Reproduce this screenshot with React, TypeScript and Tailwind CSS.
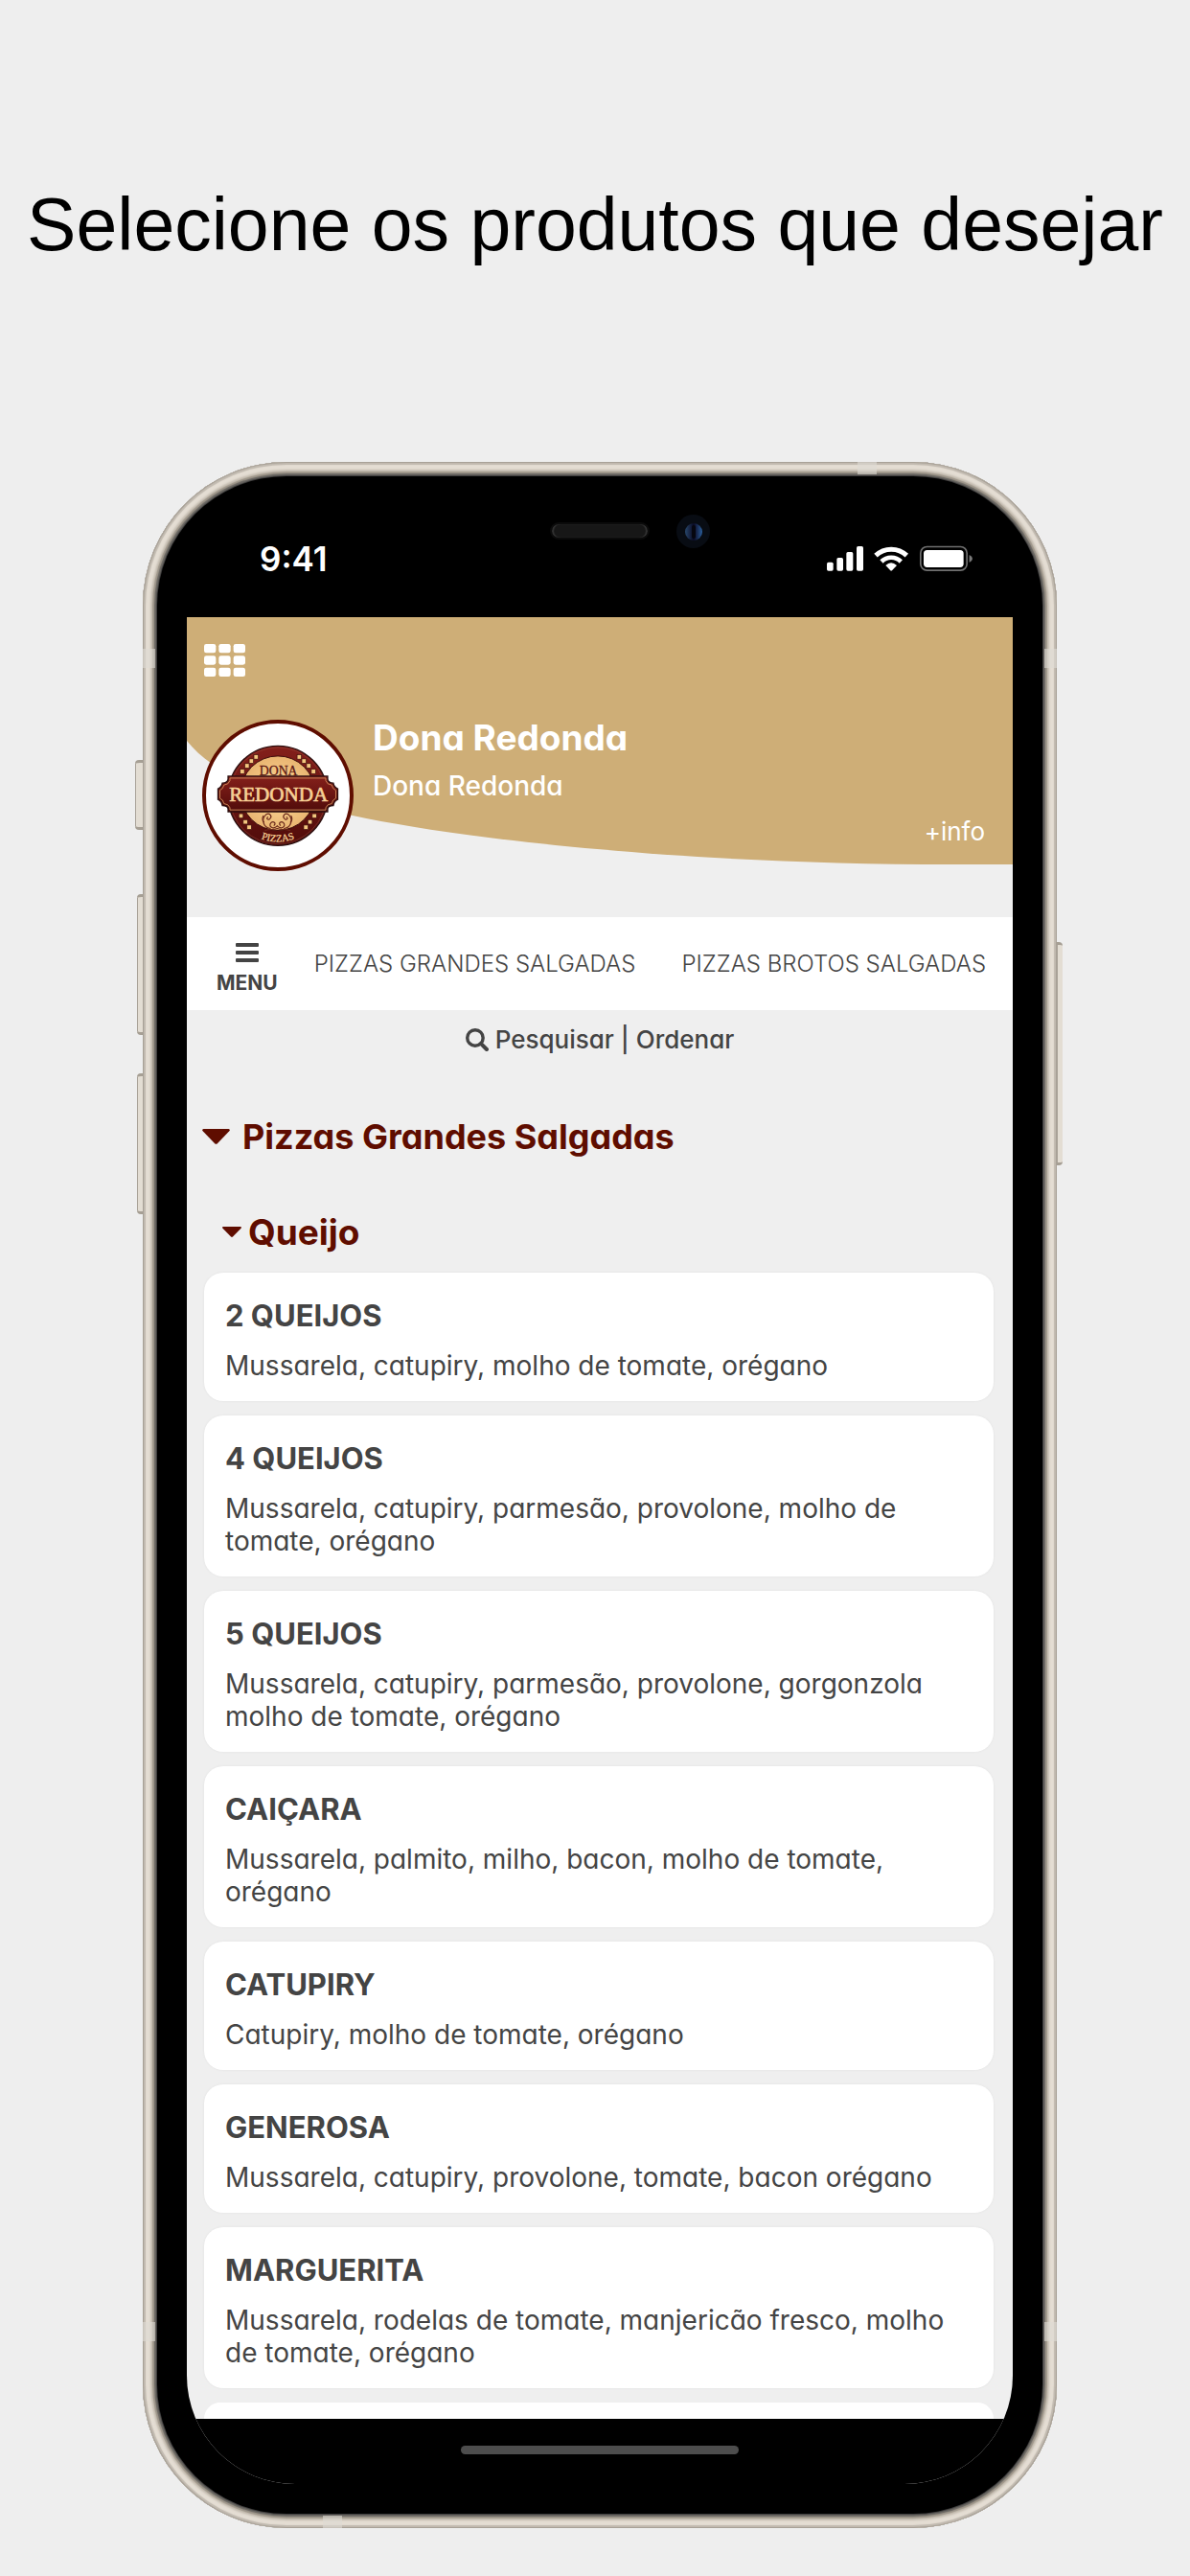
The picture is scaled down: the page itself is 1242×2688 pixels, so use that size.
import React from "react";

type Product = { name: string; description: string };

const products: Product[] = [
  { name: "2 QUEIJOS", description: "Mussarela, catupiry, molho de tomate, orégano" },
  { name: "4 QUEIJOS", description: "Mussarela, catupiry, parmesão, provolone, molho de tomate, orégano" },
  { name: "5 QUEIJOS", description: "Mussarela, catupiry, parmesão, provolone, gorgonzola molho de tomate, orégano" },
  { name: "CAIÇARA", description: "Mussarela, palmito, milho, bacon, molho de tomate, orégano" },
  { name: "CATUPIRY", description: "Catupiry, molho de tomate, orégano" },
  { name: "GENEROSA", description: "Mussarela, catupiry, provolone, tomate, bacon orégano" },
  { name: "MARGUERITA", description: "Mussarela, rodelas de tomate, manjericão fresco, molho de tomate, orégano" },
];

const studs = [
  [231, 207], [216, 220], [202, 235], [187, 253],
  [368, 207], [383, 220], [398, 235], [413, 253],
  [183, 394], [197, 413], [209, 430],
  [416, 394], [402, 413], [389, 430],
];

function Logo() {
  return (
    <svg viewBox="72 101 456 456" className="size-full" role="img" aria-label="Dona Redonda Pizzas">
      <defs>
        <radialGradient id="cream" cx="50%" cy="50%" r="50%">
          <stop offset="0" stopColor="#ffdc9c" />
          <stop offset="1" stopColor="#e9b571" />
        </radialGradient>
        <linearGradient id="wine" x1="0" y1="0" x2="0" y2="1">
          <stop offset="0" stopColor="#84201b" />
          <stop offset="0.5" stopColor="#6b1512" />
          <stop offset="1" stopColor="#4f0c0a" />
        </linearGradient>
        <path id="lower" d="M154 330 A146 146 0 0 0 446 330" />
      </defs>
      <circle cx="300" cy="330" r="158" fill="url(#wine)" stroke="#2b1010" strokeWidth="4" />
      <circle cx="300" cy="330" r="153" fill="none" stroke="#9b4a3c" strokeWidth="1.5" />
      <circle cx="300" cy="322" r="118" fill="url(#cream)" stroke="#3c0d0b" strokeWidth="3" />
      {studs.map(([x, y]) => (
        <rect key={`${x}-${y}`} x={x - 7} y={y - 7} width="14" height="14" fill="#f4c77f" stroke="#3c0d0b" strokeWidth="2" />
      ))}
      <text x="302" y="264" textAnchor="middle" fontSize="42" fill="#5c1713" stroke="#5c1713" strokeWidth="0.8" fontFamily="Liberation Serif, serif">DONA</text>
      <path
        d="M142 268 H458 V278 Q460 290 476 290 Q478 302 490 308 V342 Q478 348 476 361 Q460 361 458 371 V381 H142 V371 Q140 361 124 361 Q122 348 110 342 V308 Q122 302 124 290 Q140 290 142 278 Z"
        fill="url(#wine)" stroke="#2b1010" strokeWidth="4"
      />
      <path
        d="M148 274 H452 V282 Q456 295 471 296 Q473 308 484 313 V338 Q473 342 471 355 Q456 356 452 368 V375 H148 V368 Q144 356 129 355 Q127 342 116 338 V313 Q127 308 129 296 Q144 295 148 282 Z"
        fill="none" stroke="#d99a63" strokeWidth="2.5"
      />
      <text x="302" y="347" textAnchor="middle" fontSize="64" fill="#f7d095" stroke="#f7d095" strokeWidth="2" fontFamily="Liberation Serif, serif">REDONDA</text>
      <g fill="none" stroke="#6b2a1c" strokeWidth="3.5" strokeLinecap="round">
        <path d="M298 426 C286 438 268 428 278 416 C286 408 296 418 288 424" />
        <path d="M298 426 C310 438 328 428 318 416 C310 408 300 418 308 424" />
        <path d="M276 434 C254 432 246 404 262 390 C274 382 284 396 274 404 C268 408 262 402 268 398" />
        <path d="M320 434 C342 432 350 404 334 390 C322 382 312 396 322 404 C328 408 334 402 328 398" />
        <path d="M256 414 C250 410 250 400 254 394 M340 414 C346 410 346 400 342 394" />
        <path d="M260 440 C276 434 284 440 298 434 C312 440 320 434 338 440" />
      </g>
      <text fontSize="32" fill="#f7d095" stroke="#f7d095" strokeWidth="0.8" fontFamily="Liberation Serif, serif">
        <textPath href="#lower" startOffset="50%" textAnchor="middle">PIZZAS</textPath>
      </text>
    </svg>
  );
}

function StatusIcons() {
  return (
    <svg viewBox="729 324 456 82" className="w-[152px]" fill="#fff" role="img" aria-label="Sinal, Wi-Fi e bateria">
      <rect x="729" y="377" width="20" height="27" rx="5" />
      <rect x="760" y="363" width="20" height="41" rx="5" />
      <rect x="790" y="345" width="21" height="59" rx="5" />
      <rect x="822" y="327" width="21" height="77" rx="5" />
      <path d="M882 356 A70 70 0 0 1 979 356" fill="none" stroke="#fff" strokeWidth="15" />
      <path d="M900 375 A43 43 0 0 1 961 375" fill="none" stroke="#fff" strokeWidth="14" />
      <path d="M913 387 Q930 371 948 387 L933 403 Q930 405 928 403 Z" />
      <rect x="1022.5" y="328.5" width="145" height="74" rx="20" fill="none" stroke="#6f6f6f" strokeWidth="5" />
      <rect x="1032" y="339" width="125" height="54" rx="11" />
      <path d="M1175 354 Q1185 359 1185 366 Q1185 373 1175 378 Z" fill="#7a7a7a" />
    </svg>
  );
}

function GridIcon() {
  return (
    <svg viewBox="0 0 129 102" className="w-[43px]" fill="#fff" aria-hidden="true">
      {[0, 37, 74].map((y) =>
        [0, 46, 92].map((x) => <rect key={`${x}-${y}`} x={x} y={y} width="37" height="28" rx="7" />)
      )}
    </svg>
  );
}

function Caret({ className }: { className: string }) {
  return (
    <svg viewBox="0 0 86 48" className={className} fill="#5f0d00" aria-hidden="true">
      <path d="M4 0 H82 Q88 2 84 7 L47 45 Q43 49 39 45 L2 7 Q-2 2 4 0 Z" />
    </svg>
  );
}

function Phone({ children }: { children: React.ReactNode }) {
  const band = "absolute bg-[#dedbd4]/60";
  const key =
    "absolute border-y-3 border-[#a69f94] bg-[#e3ddd3] shadow-[inset_1px_0_0_#a9a298]";
  return (
    <div className="relative w-full max-w-[954px]">
      <div className={`${key} -left-2 top-[311px] h-[73px] w-2 rounded-l-sm`} />
      <div className={`${key} -left-1.5 top-[451px] h-[147px] w-1.5 rounded-l-sm`} />
      <div className={`${key} -left-1.5 top-[638px] h-[147px] w-1.5 rounded-l-sm`} />
      <div className={`${key} -right-1.5 top-[501px] h-[233px] w-1.5 rounded-r-sm`} />
      <div className="rounded-[150px] bg-[#3c3b3b] p-[15px] shadow-[inset_0_0_0_1px_#a8a197,inset_0_0_1px_3px_#c0b9af,inset_0_0_2px_8px_#e4ddd3,inset_0_0_1px_10px_#c5bdb1,inset_0_0_1px_12px_#a0988c,inset_0_0_1px_14px_#6b6863]">
        {children}
      </div>
      <div className={`${band} left-0 top-[195px] h-5 w-[13px]`} />
      <div className={`${band} right-0 top-[195px] h-5 w-[13px]`} />
      <div className={`${band} bottom-[195px] left-0 h-5 w-[13px]`} />
      <div className={`${band} bottom-[195px] right-0 h-5 w-[13px]`} />
      <div className={`${band} right-[188px] top-0 h-[13px] w-5`} />
      <div className={`${band} bottom-0 left-[188px] h-[13px] w-5`} />
    </div>
  );
}

export default function App() {
  return (
    <main className="flex min-h-screen flex-col items-center bg-[#eeeeee] pb-[50px] font-['Inter',sans-serif] text-[#444444] [font-feature-settings:'cv11']">
      <h1 className="whitespace-nowrap pt-[184px] pb-[198px] font-['Liberation_Sans',Arial,sans-serif] text-[77px] leading-[100px] text-black">
        Selecione os produtos que desejar
      </h1>

      <div className="flex w-full justify-center pl-2.5">
        <Phone>
          <div className="relative rounded-[135px] bg-black px-[31px] pb-[31px]">
            <div className="absolute left-1/2 top-12 h-[18px] w-[104px] -translate-x-1/2 rounded-full border-2 border-[#0b0b0b] bg-[#171717] shadow-[inset_2px_0_1px_#333,inset_-2px_0_1px_#333]" />
            <div className="absolute left-1/2 top-10 ml-[80px] flex size-[35px] items-center justify-center rounded-full bg-[#080c13]">
              <div className="flex size-[18px] items-center justify-center rounded-full bg-linear-to-r from-[#28486c] via-[#0a0a24] to-[#2a5f9c]">
                <div className="h-[14px] w-1 rounded-full bg-[#06060f]" />
              </div>
            </div>

            <div className="flex h-[147px] items-center justify-between pl-[76px] pr-[42px] pt-[25px]">
              <span className="text-[35px] font-semibold leading-10 text-white">9:41</span>
              <StatusIcons />
            </div>

            <div className="overflow-hidden rounded-b-[113px] bg-[#efefef]">
              <header className="relative pb-12 pl-4 pr-[29px] pt-7 text-white">
                <svg viewBox="0 0 862 313" preserveAspectRatio="none" className="absolute inset-0 size-full" aria-hidden="true">
                  <path d="M0 0 H862 V258 H800 C520 258 290 232 173 207 C95 190 30 167 0 129 Z" fill="#ceae77" />
                </svg>
                <div className="relative">
                  <button type="button" aria-label="Aplicativos" className="ml-0.5 block">
                    <GridIcon />
                  </button>
                  <div className="mt-[45px] flex gap-5">
                    <div className="size-[158px] shrink-0 overflow-hidden rounded-full border-4 border-[#5f0d00] bg-white">
                      <Logo />
                    </div>
                    <div className="flex grow flex-col">
                      <h2 className="text-[37px] font-bold leading-[38px]">Dona Redonda</h2>
                      <p className="mt-3.5 text-[28px] font-medium leading-[34px]">Dona Redonda</p>
                      <a href="#info" className="mt-3.5 self-end text-[26px] leading-[34px]">+info</a>
                    </div>
                  </div>
                </div>
              </header>

              <nav className="flex h-[97px] items-center overflow-hidden whitespace-nowrap bg-white pl-[31px] text-[24px] leading-[34px]">
                <button type="button" className="flex shrink-0 flex-col items-center gap-[9px] pt-[11px] text-[21px] font-bold leading-6">
                  <svg viewBox="0 0 24 21" className="w-6" fill="#444444" aria-hidden="true">
                    <rect width="24" height="4" rx="1" />
                    <rect y="8" width="24" height="4" rx="1" />
                    <rect y="16" width="24" height="4" rx="1" />
                  </svg>
                  MENU
                </button>
                <a href="#grandes" className="ml-[38px] font-light">PIZZAS GRANDES SALGADAS</a>
                <a href="#brotos" className="ml-12 font-light">PIZZAS BROTOS SALGADAS</a>
              </nav>

              <button type="button" className="flex h-[62px] w-full items-center justify-center gap-[7px] text-[26px] font-medium leading-[34px]">
                <svg viewBox="0 0 70 70" className="w-6" fill="none" stroke="#444444" aria-hidden="true">
                  <circle cx="29" cy="29" r="24" strokeWidth="10" />
                  <path d="M47 47 L64 64" strokeWidth="12" strokeLinecap="round" />
                </svg>
                Pesquisar | Ordenar
              </button>

              <section className="pl-4 pr-5 text-[#5f0d00]">
                <button type="button" className="mt-[42px] flex items-center gap-[13px] text-[36px] font-bold leading-[56px]">
                  <Caret className="w-[29px]" />
                  Pizzas Grandes Salgadas
                </button>
                <button type="button" className="mt-11 flex items-center gap-[7px] pl-[21px] text-[37px] font-bold leading-[56px]">
                  <Caret className="w-5" />
                  Queijo
                </button>
                <ul className="ml-0.5 mt-3.5 flex flex-col gap-[15px] text-[#444444]">
                  {products.map((p) => (
                    <li key={p.name} className="rounded-[20px] bg-white px-[22px] pb-5 pt-[22px] shadow-[0_0_3px_rgba(0,0,0,0.06)]">
                      <h3 className="text-[31px] font-bold leading-[46px]">{p.name}</h3>
                      <p className="mt-3 text-[28px] leading-[34px]">{p.description}</p>
                    </li>
                  ))}
                  <li className="h-[17px] rounded-t-[20px] bg-white" aria-hidden="true" />
                </ul>
              </section>

              <footer className="flex h-[68px] justify-center bg-black pt-7">
                <div className="h-[9px] w-[290px] rounded-full bg-[#4d4d4d]" />
              </footer>
            </div>
          </div>
        </Phone>
      </div>
    </main>
  );
}
